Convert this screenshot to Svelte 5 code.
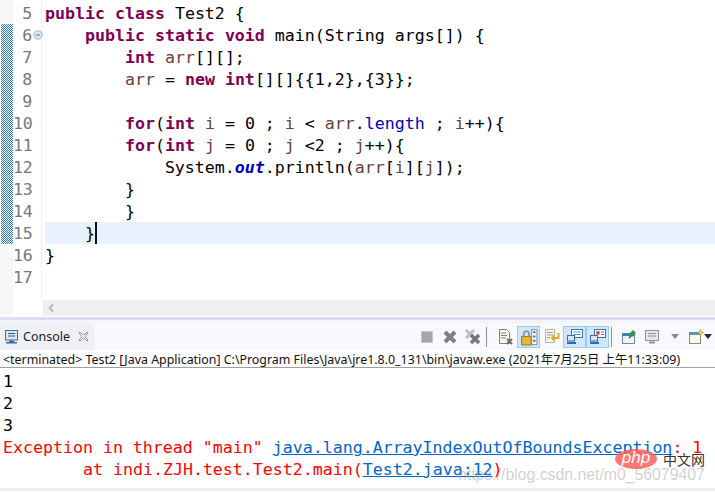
<script>
  const lines = [
    { n: 5, h: '<b>public</b> <b>class</b> Test2 {' },
    { n: 6, h: '    <b>public</b> <b>static</b> <b>void</b> main(String args[]) {', fold: true },
    { n: 7, h: '        <b>int</b> <i>arr</i>[][];' },
    { n: 8, h: '        <i>arr</i> = <b>new</b> <b>int</b>[][]{{1,2},{3}};' },
    { n: 9, h: '' },
    { n: 10, h: '        <b>for</b>(<b>int</b> <i>i</i> = 0 ; <i>i</i> &lt; <i>arr</i>.<u>length</u> ; <i>i</i>++){' },
    { n: 11, h: '        <b>for</b>(<b>int</b> <i>j</i> = 0 ; <i>j</i> &lt;2 ; <i>j</i>++){' },
    { n: 12, h: '            System.<em>out</em>.println(<i>arr</i>[<i>i</i>][<i>j</i>]);' },
    { n: 13, h: '        }' },
    { n: 14, h: '        }' },
    { n: 15, h: '    }<s></s>', cur: true },
    { n: 16, h: '}' },
    { n: 17, h: '' }
  ];
</script>

<div class="page">
  <section class="editor">
    <div class="ruler"><div class="dots"></div></div>
    <div class="gutter">
      {#each lines as l}
        <div class="num">{l.n}</div>
      {/each}
      <svg class="fold" width="10" height="10" viewBox="0 0 10 10"><circle cx="5" cy="5" r="4.2" fill="#dfe6ee" stroke="#a9b6c6"/><path d="M2.8 5h4.4" stroke="#5f6f80"/></svg>
    </div>
    <div class="code">
      {#each lines as l}
        <div class="line" class:cur={l.cur}>{@html l.h}</div>
      {/each}
    </div>
    <div class="hbar">
      <svg width="8" height="10" viewBox="0 0 8 10"><path d="M6 1.500 2.500 5 6 8.500" fill="none" stroke="#b4b4b4" stroke-width="1.800"/></svg>
    </div>
  </section>
  <div class="sash"></div>
  <div class="bar">
    <div class="tab">
      <svg width="16" height="16" viewBox="0 0 16 16"><rect x="1.500" y="1.500" width="12" height="9.500" fill="#dbe6f3" stroke="#3a6ea5"/><path d="M4 4.500h7M4 7h7" stroke="#33588a"/><path d="M5 11.500h5v1.500h3v1.500H2V13h3z" fill="#2f6db0"/></svg>
      <span>Console</span>
      <svg class="close" width="11" height="11" viewBox="0 0 11 11"><path d="M1.500 1 5.500 4 9.500 1 10 2 7 5.500 10 9 9 10 5.500 7 2 10 1 9 4 5.500 1 2z" fill="#fff" stroke="#8d8d8d"/></svg>
    </div>
    <div class="tools">
      <span class="t"><svg width="14" height="14" viewBox="0 0 14 14"><rect x="1.500" y="1.500" width="11" height="11" fill="#a6a6a6" stroke="#c6c6c6"/></svg></span>
      <span class="t"><svg width="16" height="16" viewBox="0 0 16 16"><path d="M3 3l10 10M13 3 3 13" stroke="#7f7f7f" stroke-width="4"/></svg></span>
      <span class="t"><svg width="17" height="17" viewBox="0 0 17 17"><path d="M2 2l8 8M10 2l-8 8" stroke="#c0c0c0" stroke-width="3"/><path d="M7 7l8 8M15 7l-8 8" stroke="#777" stroke-width="3.500"/></svg></span>
      <span class="sep sep1"></span>
      <span class="t"><svg width="16" height="17" viewBox="0 0 16 17"><path d="M1.500 1.500h7l3 3v11h-10z" fill="#fbf6e6" stroke="#857f6a"/><path d="M3 5h5M3 7.500h6M3 10h5" stroke="#6a88a8"/><path d="M9 11l5 5M14 11l-5 5" stroke="#6f6f6f" stroke-width="2"/></svg></span>
      <span class="t on"><svg width="18" height="18" viewBox="0 0 16 17"><rect x="10.500" y="1.500" width="5" height="14" fill="#fff" stroke="#8a8f99"/><path d="M12 4h2M12 8h2M12 12h2" stroke="#3a5f95" stroke-width="2"/><rect x="1" y="8" width="9" height="8" fill="#e6b53a" stroke="#a77f1e"/><path d="M3 8V5.500a2.500 2.500 0 0 1 5 0V8" fill="none" stroke="#8d8d8d" stroke-width="1.500"/></svg></span>
      <span class="t"><svg width="16" height="17" viewBox="0 0 16 17"><path d="M1.500 1.500h9v13h-9z" fill="#fbf6e6" stroke="#bdb58f"/><path d="M3 4.500h6M3 7h6M3 9.500h3" stroke="#8aa0b8"/><path d="M14.500 5v5h-6M10.500 7.500 8 10l2.500 2.500" fill="none" stroke="#d9a93c" stroke-width="2"/></svg></span>
      <span class="t on"><svg width="18" height="17" viewBox="0 0 18 17"><rect x="5.500" y="1.500" width="11" height="8" fill="#fff" stroke="#3b76ad"/><path d="M7.500 4h7M7.500 6.500h7" stroke="#5f93c4"/><rect x="1.500" y="7.500" width="7" height="5.500" fill="#d8e6f4" stroke="#2f6db0"/><path d="M1 15h9" stroke="#2f6db0" stroke-width="2"/></svg></span>
      <span class="t on"><svg width="18" height="17" viewBox="0 0 18 17"><rect x="5.500" y="1.500" width="11" height="8" fill="#fff" stroke="#3b76ad"/><path d="M7.500 3.500l3 3M10.500 3.500l-3 3" stroke="#e03030" stroke-width="1.600"/><path d="M12 4h3M12 6.500h3" stroke="#5f93c4"/><rect x="1.500" y="7.500" width="7" height="5.500" fill="#d8e6f4" stroke="#2f6db0"/><path d="M1 15h9" stroke="#2f6db0" stroke-width="2"/></svg></span>
      <span class="sep sep2"></span>
      <span class="t"><svg width="16" height="16" viewBox="0 0 16 16"><rect x="1.500" y="4.500" width="12" height="10" fill="#eef3f8" stroke="#6d8aa6"/><path d="M1.500 4.500h12v2.500h-12z" fill="#3a7fc0"/><path d="M8 5l4-4 3 3-4 4z" fill="#2e9b3a"/><path d="M8 9l2-2" stroke="#1f6d28" stroke-width="1.500"/></svg></span>
      <span class="t"><svg width="16" height="16" viewBox="0 0 16 16"><rect x="1.500" y="1.500" width="13" height="10" fill="#e6e6e6" stroke="#929292"/><path d="M4 4.500h8M4 7h8" stroke="#929292"/><path d="M5 12.500h6v2H5z" fill="#929292"/></svg></span>
      <span class="arrow a1"><svg width="8" height="5" viewBox="0 0 8 5"><path d="M0 0h8L4 5z" fill="#8a8a8a"/></svg></span>
      <span class="t"><svg width="16" height="16" viewBox="0 0 16 16"><rect x="1.500" y="3.500" width="11" height="11" fill="#fbf8ea" stroke="#8a8a70"/><path d="M1.500 3.500h11v2.500h-11z" fill="#5b93c8"/><path d="M12.500 .5l1 2 2 1-2 1-1 2-1-2-2-1 2-1z" fill="#f0cf60" stroke="#b8902a" stroke-width=".6"/></svg></span>
      <span class="arrow a2"><svg width="8" height="5" viewBox="0 0 8 5"><path d="M0 0h8L4 5z" fill="#2a2a2a"/></svg></span>
    </div>
  </div>
  <div class="status">&lt;terminated&gt; Test2 [Java Application] C:\Program Files\Java\jre1.8.0_131\bin\javaw.exe (2021年7月25日 上午11:33:09)</div>
  <section class="console">
    <div class="out">1</div>
    <div class="out">2</div>
    <div class="out">3</div>
    <div class="err">Exception in thread "main" <a href="#a">java.lang.ArrayIndexOutOfBoundsException</a>: 1</div>
    <div class="err trace">at indi.ZJH.test.Test2.main(<a href="#a">Test2.java:12</a>)</div>
  </section>
  <div class="foot"></div>
  <div class="mark">https://blog.csdn.net/m0_56079407</div>
  <div class="php"><span class="pill">php</span><span class="cn">中文网</span></div>
</div>

<style>
  :global(body) { margin: 0; background: #fff; }
  .page {
    position: relative;
    width: 715px;
    height: 492px;
    overflow: hidden;
    background: #fff;
    font-family: "DejaVu Sans Mono", monospace;
  }
  .editor {
    position: relative;
    display: flex;
    height: 317px;
    background: #fff;
    padding-top: 2px;
    box-sizing: border-box;
  }
  .ruler {
    width: 13px;
    height: 315px;
    margin-top: -2px;
    background: #f7f7f7;
    flex: none;
  }
  .dots {
    margin: 24px 0 0 1px;
    height: 220px;
    background: repeating-conic-gradient(#2f7fd0 0 25%, #fff 0 50%) 0 0 / 2px 2px;
  }
  .gutter {
    position: relative;
    width: 29px;
    height: 298px;
    margin-top: -2px;
    padding-top: 2px;
    box-sizing: border-box;
    border-right: 1px solid #f0f0f0;
    flex: none;
    background: #fff;
  }
  .num {
    height: 22px;
    line-height: 24px;
    font-size: 16.6px;
    color: #787878;
    text-align: right;
    padding-right: 9px;
    box-sizing: border-box;
    white-space: nowrap;
    letter-spacing: -0.2px;
  }
  .fold { position: absolute; left: 20px; top: 30px; }
  .code {
    margin-left: 3px;
    flex: 1;
    min-width: 0;
  }
  .line {
    height: 22px;
    line-height: 24px;
    font-size: 16.6px;
    color: #000;
    white-space: pre;
  }
  .line.cur { background: #e8f2fe; }
  .line :global(b) { color: #7f0055; font-weight: 700; }
  .line :global(i) { color: #6a3e3e; font-style: normal; }
  .line :global(u) { color: #0000c0; text-decoration: none; }
  .line :global(em) { color: #0000c0; font-weight: 700; font-style: italic; }
  .line :global(s) {
    display: inline-block;
    width: 2px;
    height: 22px;
    vertical-align: top;
    background: #111;
  }
  .hbar {
    position: absolute;
    left: 43px;
    right: 0;
    top: 300px;
    height: 16px;
    background: #f0f0f0;
    display: flex;
    align-items: center;
    padding-left: 4px;
  }
  .sash {
    height: 6px;
    background: linear-gradient(#dcdff0 0 3px, #f4f5fa 3px);
  }
  .bar {
    display: flex;
    height: 27px;
    background: #f8f9fc;
  }
  .tab {
    width: 95px;
    box-sizing: border-box;
    background: #eef0f5;
    border-top-right-radius: 8px;
    display: flex;
    align-items: center;
    padding-left: 4px;
    font: 12.5px "Noto Sans", sans-serif;
    color: #1a1a1a;
    gap: 3px;
    flex: none;
  }
  .close { margin-left: 5px; }
  .tools {
    margin-left: 320px;
    display: flex;
    align-items: center;
    height: 27px;
  }
  .t {
    width: 23px;
    height: 22px;
    box-sizing: border-box;
    display: flex;
    align-items: center;
    justify-content: center;
    flex: none;
  }
  .t.on {
    background: #cfe6fb;
    border: 1px solid #9ccbf2;
  }
  .sep { width: 1px; height: 20px; background: #8f8f8f; flex: none; }
  .sep1 { margin: 0 7px 0 2px; }
  .sep2 { margin: 0 5px 0 2px; }
  .arrow { display: flex; justify-content: center; flex: none; }
  .a1 { width: 14px; margin: 0 2px 0 5px; }
  .a2 { width: 14px; margin-left: -6px; }
  .status {
    height: 17px;
    padding-left: 3px;
    font: 12.4px/20px "Noto Sans", "Noto Sans CJK SC", sans-serif;
    color: #111;
    white-space: nowrap;
    border-bottom: 1px solid #a0a0a0;
    background: #fff;
  }
  .console {
    height: 120px;
    padding: 2px 0 0 3px;
    box-sizing: border-box;
    font-size: 16.6px;
    background: #fff;
  }
  .out, .err { height: 22px; line-height: 24px; white-space: pre; }
  .out { color: #000; }
  .err { color: #f00; }
  .trace { padding-left: 80px; }
  .err a { color: #0066cc; text-decoration: underline; }
  .foot { height: 3px; background: #f0f0f0; }
  .mark {
    position: absolute;
    left: 458px;
    top: 466px;
    font: 15.8px "Liberation Sans", sans-serif;
    color: rgba(150, 150, 150, 0.45);
    white-space: nowrap;
  }
  .php {
    position: absolute;
    left: 615px;
    top: 449px;
    display: flex;
    align-items: center;
    gap: 6px;
  }
  .pill {
    width: 42px;
    height: 20px;
    border-radius: 50%;
    background: rgba(255, 95, 90, 0.85);
    color: #fff;
    font: italic 17px/18px "Liberation Sans", sans-serif;
    text-align: center;
  }
  .cn {
    font: 14px/20px "Noto Sans CJK SC", sans-serif;
    color: #333;
  }
</style>
